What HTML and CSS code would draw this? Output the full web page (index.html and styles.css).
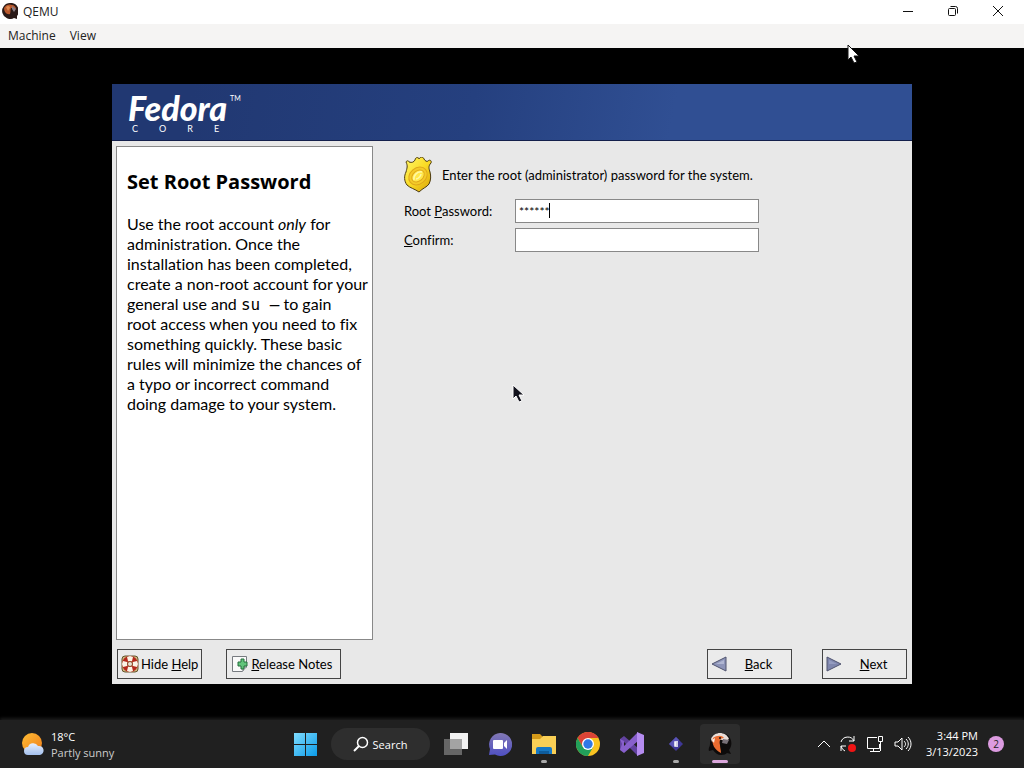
FILE: index.html
```html
<!DOCTYPE html>
<html lang="en">
<head>
    <meta charset="UTF-8">
    <meta name="viewport" content="width=device-width, initial-scale=1.0">
    <title>QEMU</title>
    <link rel="stylesheet" href="styles.css">
</head>
<body>
    <!-- QEMU window -->
    <header class="titlebar">
        <svg class="app-icon" width="16" height="16" viewBox="0 0 16 16">
            <path d="M8 0a8 8 0 1 0 4 15l3 1v-3A8 8 0 0 0 8 0z" fill="#2a1a17"/>
            <path d="M2 5c2-4 6-4 8-3 2 0 4 2 4 4l-5-1c-1 2 0 3-1 6-3 1-6-2-6-6z" fill="#b9582c"/>
            <path d="M4 4c2-2 4-1 4 1L6 8z" fill="#e08a4e"/>
            <path d="M10 3l4 3-2 3-2-3z" fill="#8a7d84"/>
        </svg>
        <span class="window-title">QEMU</span>
        <div class="window-controls">
            <button type="button" aria-label="Minimize"><svg width="12" height="12" viewBox="0 0 12 12"><path d="M1 6.500h10"/></svg></button>
            <button type="button" aria-label="Restore"><svg width="12" height="12" viewBox="0 0 12 12"><rect x="1.500" y="3.500" width="7" height="7" rx="1"/><path d="M3.500 1.500h5a2 2 0 0 1 2 2v5"/></svg></button>
            <button type="button" aria-label="Close"><svg width="12" height="12" viewBox="0 0 12 12"><path d="M1 1l10 10M11 1L1 11"/></svg></button>
        </div>
    </header>
    <nav class="menubar">
        <button type="button">Machine</button>
        <button type="button">View</button>
    </nav>

    <main class="screen">
        <section class="installer">
            <div class="banner">
                <div class="brand">
                    <span class="brand-name">Fedora</span><span class="brand-tm">TM</span>
                </div>
                <div class="brand-core"><span>C</span><span>O</span><span>R</span><span>E</span></div>
            </div>

            <div class="content">
                <!-- Help text -->
                <aside class="help">
                    <h1>Set Root Password</h1>
                    <p>
                        Use the root account <em>only</em> for<br>
                        administration. Once the<br>
                        installation has been completed,<br>
                        create a non-root account for your<br>
                        general use and <code>su –</code> to gain<br>
                        root access when you need to fix<br>
                        something quickly. These basic<br>
                        rules will minimize the chances of<br>
                        a typo or incorrect command<br>
                        doing damage to your system.
                    </p>
                </aside>

                <!-- Password form -->
                <form class="password-form">
                    <div class="intro">
                        <svg width="28" height="36" viewBox="0 0 28 36">
                            <defs>
                                <linearGradient id="gold" x1="0" y1="0" x2="1" y2="1">
                                    <stop offset="0" stop-color="#fff76a"/>
                                    <stop offset="0.500" stop-color="#fadb25"/>
                                    <stop offset="1" stop-color="#d9a20a"/>
                                </linearGradient>
                            </defs>
                            <path d="M2 5c1-2 3-1 3 0 3 1 5 0 6-2 0-3 4-3 4-1 1-2 4-3 5 0 1 2 3 3 4 2 2-2 4 0 3 2-3 3-2 6-1 9 1 4 1 8-1 12-2 3-6 4-10 8-4-3-9-4-12-7-3-4-3-9-1-13 1-4 2-6 0-10z" fill="url(#gold)" stroke="#4c3b10"/>
                            <ellipse cx="14" cy="19" rx="10" ry="8" transform="rotate(-40 14 19)" fill="#f4cb28" stroke="#dfa71c"/>
                            <ellipse cx="14" cy="19" rx="7" ry="5" transform="rotate(-40 14 19)" fill="#ffe84a" stroke="#dfa71c"/>
                            <path d="M10 23c-1-4 3-9 8-8M12 22c2 0 5-3 5-5" fill="none" stroke="#fff9a5" stroke-width="1.500"/>
                        </svg>
                        <span>Enter the root (administrator) password for the system.</span>
                    </div>
                    <div class="field">
                        <label for="rootPassword">Root <u>P</u>assword:</label>
                        <div class="input-wrap">
                            <input type="text" id="rootPassword" value="******">
                            <span class="caret"></span>
                        </div>
                    </div>
                    <div class="field">
                        <label for="confirmPassword"><u>C</u>onfirm:</label>
                        <div class="input-wrap">
                            <input type="text" id="confirmPassword">
                        </div>
                    </div>
                </form>
            </div>

            <footer class="actions">
                <button type="button" class="btn">
                    <svg width="18" height="18" viewBox="0 0 18 18">
                        <rect x="1" y="1" width="16" height="16" rx="3" fill="#cdb67c" stroke="#65542f"/>
                        <circle cx="9" cy="9" r="5.500" fill="none" stroke="#b5281d" stroke-width="5"/>
                        <path d="M9 1l3 1-1 4H7L6 2zM9 17l3-1-1-4H7l-1 4zM1 9l1 3 4-1V7L2 6zM17 9l-1 3-4-1V7l4-1z" fill="#fbf4e6"/>
                        <circle cx="9" cy="9" r="2.500" fill="#e9e3d2" stroke="#8c3a22"/>
                    </svg>
                    <span>Hide <u>H</u>elp</span>
                </button>
                <button type="button" class="btn btn-notes">
                    <svg width="18" height="18" viewBox="0 0 18 18">
                        <path d="M1.500 1.500h14v10l-4 5h-10z" fill="#fafafa" stroke="#777b80"/>
                        <path d="M12 16v-4h4" fill="#c8cbcd" stroke="#777b80"/>
                        <path d="M10 4h3v3h3v4h-3v3h-3v-3H7V7h3z" fill="#62c47b" stroke="#256f3c"/>
                    </svg>
                    <span><u>R</u>elease Notes</span>
                </button>
                <span class="spacer"></span>
                <button type="button" class="btn btn-nav">
                    <svg width="16" height="16" viewBox="0 0 16 16"><path d="M15 1v14L1 8z" fill="#8d94b8" stroke="#50546f"/><path d="M13 4L5 8h8z" fill="#b0b6d2"/></svg>
                    <span><u>B</u>ack</span>
                </button>
                <button type="button" class="btn btn-nav">
                    <svg width="16" height="16" viewBox="0 0 16 16"><path d="M1 1v14l14-7z" fill="#7f86ad" stroke="#50546f"/><path d="M3 4v4h8z" fill="#959cc0"/></svg>
                    <span><u>N</u>ext</span>
                </button>
            </footer>
        </section>

        <!-- Mouse pointers of the host and the guest -->
        <svg class="pointer pointer-host" width="13" height="20" viewBox="0 0 13 20"><path d="M1 1v15l3-3 3 6 3-1-3-6h5z" fill="#fff" stroke="#111"/></svg>
        <svg class="pointer pointer-guest" width="13" height="20" viewBox="0 0 13 20"><path d="M1 1v14l3-3 3 6 3-1-3-6h5z" fill="#12121c" stroke="#fff"/></svg>
    </main>

    <footer class="taskbar">
        <div class="weather">
            <svg width="24" height="24" viewBox="0 0 24 24">
                <defs>
                    <linearGradient id="sun" x1="0" y1="0" x2="1" y2="1">
                        <stop offset="0" stop-color="#ffbd35"/>
                        <stop offset="1" stop-color="#ee7d1a"/>
                    </linearGradient>
                    <linearGradient id="cloud" x1="0" y1="0" x2="0" y2="1">
                        <stop offset="0" stop-color="#e7effc"/>
                        <stop offset="1" stop-color="#a3c0ee"/>
                    </linearGradient>
                </defs>
                <circle cx="11" cy="11" r="10" fill="url(#sun)"/>
                <path d="M7 23a4 4 0 0 1 0-8 5.500 5.500 0 0 1 10-1 4.500 4.500 0 0 1 2 9z" fill="url(#cloud)"/>
            </svg>
            <div class="weather-text">
                <span>18°C</span>
                <span class="weather-desc">Partly sunny</span>
            </div>
        </div>

        <div class="apps">
            <button type="button" class="app" aria-label="Start">
                <svg width="24" height="24" viewBox="0 0 24 24">
                    <defs>
                        <linearGradient id="win" x1="0" y1="0" x2="1" y2="1">
                            <stop offset="0" stop-color="#7fdcff"/>
                            <stop offset="1" stop-color="#0a9be8"/>
                        </linearGradient>
                    </defs>
                    <path d="M1 1h11v11H1zM13 1h11v11H13zM1 13h11v11H1zM13 13h11v11H13z" fill="url(#win)"/>
                </svg>
            </button>
            <button type="button" class="search">
                <svg width="16" height="16" viewBox="0 0 16 16"><circle cx="9.500" cy="6.500" r="5" fill="none" stroke="#fff" stroke-width="1.500"/><path d="M6 10l-5 5" stroke="#fff" stroke-width="2"/></svg>
                <span>Search</span>
            </button>
            <button type="button" class="app" aria-label="Task view">
                <svg width="24" height="24" viewBox="0 0 24 24"><path d="M6 1h18v16H6z" fill="#f1f1f1"/><path d="M0 7h18v16H0z" fill="#666"/><path d="M6 7h12v10H6z" fill="#a3a3a3"/></svg>
            </button>
            <button type="button" class="app" aria-label="Chat">
                <svg width="24" height="24" viewBox="0 0 24 24">
                    <defs>
                        <linearGradient id="chat" x1="0" y1="0" x2="0" y2="1">
                            <stop offset="0" stop-color="#8278b4"/>
                            <stop offset="1" stop-color="#4f50c4"/>
                        </linearGradient>
                    </defs>
                    <path d="M12 1a11.500 11.500 0 1 1-5 21.500L1 23l1-6A11.500 11.500 0 0 1 12 1z" fill="url(#chat)"/>
                    <rect x="5" y="8" width="10" height="9" rx="1" fill="#fff"/>
                    <path d="M16 11l3-3v9l-3-3z" fill="#fff"/>
                </svg>
            </button>
            <button type="button" class="app running" aria-label="File Explorer">
                <svg width="24" height="24" viewBox="0 0 24 24">
                    <path d="M0 2h8l3 3h12v8H0z" fill="#d59a19"/>
                    <path d="M0 7h8l3-3h13v18H0z" fill="#f9cf55"/>
                    <path d="M4 22v-5a2 2 0 0 1 2-2h12a2 2 0 0 1 2 2v5z" fill="#1678c4"/>
                    <path d="M7 19h10v3H7z" fill="#0e5c9c"/>
                </svg>
            </button>
            <button type="button" class="app" aria-label="Chrome">
                <svg width="24" height="24" viewBox="0 0 24 24">
                    <circle cx="12" cy="12" r="12" fill="#f9c321"/>
                    <path d="M1.600 6A12 12 0 0 1 22.400 6H12L6.800 15z" fill="#dc4437"/>
                    <path d="M1.600 6A12 12 0 0 0 12 24l5.200-9H6.800z" fill="#22a05a"/>
                    <circle cx="12" cy="12" r="6" fill="#fff"/>
                    <circle cx="12" cy="12" r="4.700" fill="#2f78e6"/>
                </svg>
            </button>
            <button type="button" class="app" aria-label="Visual Studio">
                <svg width="24" height="24" viewBox="0 0 24 24">
                    <path d="M0 7l4-3 14 12v8L4 10v6l-4 2z" fill="#62429f"/>
                    <path d="M0 18l4 3L18 9V0L4 14V9L0 7l2 5z" fill="#8860cc"/>
                    <path d="M17 0l7 3v18l-7 3z" fill="#b58cf0"/>
                </svg>
            </button>
            <button type="button" class="app running" aria-label="Editor">
                <svg width="16" height="16" viewBox="0 0 16 16"><path d="M8 1l7 7-7 7-7-7z" fill="#3e3796"/><path d="M8 1l3 3-6 7-4-3z" fill="#5a54b5"/><path d="M10 6H7v4h3M7 8h3" fill="none" stroke="#fff" stroke-width="1.500"/></svg>
            </button>
            <button type="button" class="app active" aria-label="QEMU">
                <svg width="24" height="24" viewBox="0 0 24 24">
                    <path d="M12 1C6 1 2 5 2 12c0 3-2 4-1 7l4-1c2 3 5 5 8 5s5-1 6-2l4 1-2-4c3-4 3-8 1-12-2-4-6-5-10-5z" fill="#0d0b0b"/>
                    <path d="M3 7C6-1 18-1 21 7l-3 2-8-2-6 3z" fill="#e8ddd8"/>
                    <path d="M5 6c4-3 9-3 11 0-4 0-5 3-4 7 0 3 1 5 1 8C7 18 3 12 5 6z" fill="#e96b30"/>
                    <path d="M4 8l3-2-1 5z" fill="#f7eee8"/>
                    <circle cx="12" cy="6" r="1" fill="#161010"/>
                    <path d="M15 7l6 1-2 4-5-1z" fill="#777077"/>
                </svg>
            </button>
        </div>

        <div class="tray">
            <svg width="12" height="16" viewBox="0 0 12 16"><path d="M0 11l6-6 6 6"/></svg>
            <svg width="16" height="18" viewBox="0 0 16 18"><path d="M1 7a7 7 0 0 1 13-1M14 1v5H9M5 16a7 7 0 0 1-4-5M1 16v-5h5"/><circle cx="12" cy="13" r="4" fill="#f01414" stroke="none"/></svg>
            <svg width="18" height="18" viewBox="0 0 18 18"><path d="M11 2.500H1.500v11h12V9M4 16.500h10M7.500 14v2M12.500 1.500h4v5h-4zM14.500 7v9"/></svg>
            <svg width="18" height="18" viewBox="0 0 18 18"><path d="M1 7h3l4-4v12l-4-4H1zM10 6c2 2 2 4 0 6M12 4c3 3 3 7 0 10M14 2c4 4 4 10 0 14"/></svg>
            <div class="clock">
                <time>3:44 PM</time>
                <time>3/13/2023</time>
            </div>
            <span class="badge">2</span>
        </div>
    </footer>
</body>
</html>
```
FILE: styles.css
```css
* {
    box-sizing: border-box;
    margin: 0;
    padding: 0;
}

body {
    display: flex;
    flex-direction: column;
    min-height: 100vh;
    background: #000;
    font-family: "Open Sans", "Noto Sans", sans-serif;
    font-size: 12px;
    color: #222;
}

button {
    border: none;
    background: none;
    font: inherit;
    color: inherit;
}

svg {
    display: block;
    flex: none;
}

/* Window frame */
.titlebar {
    display: flex;
    align-items: center;
    height: 24px;
    padding: 0 4px 2px 2px;
    background: #fff;
}

.window-title {
    margin-left: 5px;
}

.window-controls {
    display: flex;
    margin-left: auto;
}

.window-controls button {
    display: flex;
    align-items: center;
    justify-content: center;
    width: 45px;
    height: 20px;
}

.window-controls svg {
    fill: none;
    stroke: #111;
}

.menubar {
    display: flex;
    gap: 14px;
    height: 24px;
    padding: 0 8px 2px;
    background: #f5f4f3;
}

/* Guest screen */
.screen {
    position: relative;
    display: flex;
    flex: 1;
    padding: 36px 112px;
}

.installer {
    display: flex;
    flex: 1;
    flex-direction: column;
    background: #e8e8e8;
    font-family: Lato, sans-serif;
    font-size: 13px;
    font-variant-ligatures: none;
    color: #000;
}

.banner {
    height: 57px;
    padding: 4px 16px;
    border-bottom: 1px solid #14204c;
    background: linear-gradient(100deg, #213872 10%, #25407f 45%, #304f93 70%);
    color: #fff;
}

.brand {
    display: flex;
    height: 36px;
    line-height: 40px;
}

.brand-name {
    font-family: Lato, sans-serif;
    font-size: 34px;
    font-weight: 900;
    font-style: italic;
}

.brand-tm {
    margin-left: 3px;
    font-size: 7px;
    line-height: 20px;
}

.brand-core {
    display: flex;
    gap: 21px;
    padding-left: 4px;
    font-size: 9px;
    line-height: 10px;
}

.content {
    display: flex;
    flex: 1;
    padding: 5px 4px 0;
}

.help {
    width: 257px;
    padding: 22px 0 10px 10px;
    border: 1px solid #888;
    background: #fff;
    white-space: nowrap;
}

.help h1 {
    margin-bottom: 20px;
    font-family: "Open Sans", sans-serif;
    font-size: 20px;
    line-height: 25px;
}

.help p {
    font-size: 16px;
    line-height: 20px;
}

.help code {
    font-family: "DejaVu Sans Mono", monospace;
    font-size: 16px;
    line-height: 16px;
}

.password-form {
    display: flex;
    flex: 1;
    flex-direction: column;
    gap: 5px;
    padding: 10px 31px;
}

.intro {
    display: flex;
    align-items: center;
    gap: 10px;
    height: 38px;
}

.field {
    display: flex;
    align-items: center;
}

.field label {
    width: 111px;
}

.input-wrap {
    position: relative;
    width: 244px;
}

.input-wrap input {
    display: block;
    width: 100%;
    height: 24px;
    padding: 0 3px;
    border: 1px solid #888;
    outline: none;
    background: #fff;
    font-family: Lato, sans-serif;
    font-size: 12px;
}

.caret {
    position: absolute;
    top: 4px;
    left: 34px;
    width: 1px;
    height: 15px;
    background: #000;
}

.actions {
    display: flex;
    gap: 24px;
    padding: 9px 5px 5px;
}

.btn {
    display: flex;
    align-items: center;
    gap: 2px;
    height: 30px;
    padding: 0 3px;
    border: 1px solid #444;
    background: #ebebeb;
    white-space: nowrap;
}

.btn-notes {
    width: 115px;
    padding-left: 4px;
}

.spacer {
    flex: 1;
}

.btn-nav {
    width: 85px;
}

.btn-nav + .btn-nav {
    margin-left: 6px;
}

.btn-nav span {
    flex: 1;
    text-align: center;
}

.pointer {
    position: absolute;
}

.pointer-host {
    top: -4px;
    left: 847px;
}

.pointer-guest {
    top: 336px;
    left: 512px;
}

/* Host taskbar */
.taskbar {
    display: grid;
    grid-template-columns: 1fr auto 1fr;
    align-items: center;
    height: 48px;
    background: #202020;
    box-shadow: 0 -2px 3px #1b1b1b;
    font-size: 11px;
    color: #fff;
}

.weather {
    display: flex;
    align-items: center;
    gap: 6px;
    padding-left: 21px;
}

.weather-text {
    display: flex;
    flex-direction: column;
    padding-top: 2px;
    line-height: 16px;
}

.weather-desc {
    color: #ccc;
}

.apps {
    display: flex;
    align-items: center;
}

.app {
    position: relative;
    display: flex;
    align-items: center;
    justify-content: center;
    width: 44px;
    height: 40px;
}

.search {
    display: flex;
    align-items: center;
    justify-content: center;
    gap: 4px;
    width: 99px;
    height: 32px;
    margin: 0 4px;
    border-radius: 16px;
    background: #2e2e2e;
}

.running::after,
.active::after {
    content: "";
    position: absolute;
    bottom: 1px;
    width: 6px;
    height: 3px;
    border-radius: 2px;
    background: #aaa;
}

.active {
    width: 40px;
    margin: 0 2px;
    border-radius: 4px;
    background: #2d2d2d;
}

.active::after {
    width: 16px;
    background: #dba7dc;
}

.tray {
    display: flex;
    align-items: center;
    justify-content: flex-end;
    gap: 10px;
    padding-right: 20px;
}

.tray svg {
    fill: none;
    stroke: #fff;
}

.clock {
    display: flex;
    flex-direction: column;
    margin-left: 4px;
    line-height: 16px;
    text-align: right;
}

.badge {
    width: 16px;
    height: 16px;
    border-radius: 8px;
    background: #dc9be0;
    font-size: 10px;
    line-height: 16px;
    text-align: center;
    color: #222;
}
```
